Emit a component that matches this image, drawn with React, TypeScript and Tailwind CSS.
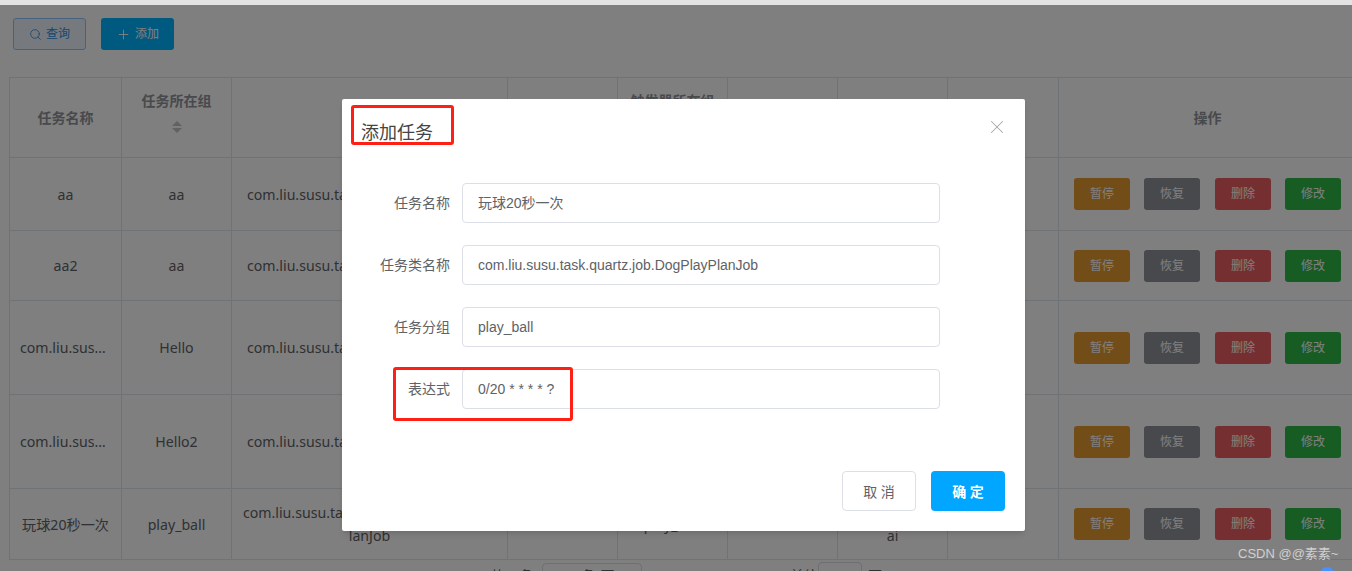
import { Plus, Search, X } from "lucide-react";

const COL_WIDTHS = [112, 110, 276, 110, 110, 110, 110, 111, 298];

const ROWS = [
  { h: "h-[73px]", name: "aa", group: "aa", cls: "com.liu.susu.task.quartz.job.HelloJob", trigger: "aa", tGroup: "aa", cron: "0/5 * * * * ?", zone: "Asia/Shanghai" },
  { h: "h-[70px]", name: "aa2", group: "aa", cls: "com.liu.susu.task.quartz.job.HelloJob", trigger: "aa2", tGroup: "aa", cron: "0/5 * * * * ?", zone: "Asia/Shanghai" },
  { h: "h-[94px]", name: "com.liu.susu.task.quartz.job.HelloJob", group: "Hello", cls: "com.liu.susu.task.quartz.job.HelloJob", trigger: "Hello", tGroup: "Hello", cron: "0/5 * * * * ?", zone: "Asia/Shanghai" },
  { h: "h-[94px]", name: "com.liu.susu.task.quartz.job.HelloJob2", group: "Hello2", cls: "com.liu.susu.task.quartz.job.HelloJob", trigger: "Hello2", tGroup: "Hello2", cron: "0/5 * * * * ?", zone: "Asia/Shanghai" },
  { h: "h-[71px]", name: "玩球20秒一次", group: "play_ball", cls: "com.liu.susu.task.quartz.job.DogPlayPlanJob", trigger: "ball", tGroup: "play_ball", cron: "0/20 * * * * ?", zone: "Asia/Shanghai" },
];

function SortArrows() {
  return (
    <svg width="10" height="12" viewBox="0 0 10 12" className="mx-auto mt-[9px] mb-[14px]">
      <path d="M5 0 L10 5 L0 5 Z" fill="#c0c4cc" />
      <path d="M5 12 L10 7 L0 7 Z" fill="#c0c4cc" />
    </svg>
  );
}

function Th({ label, sort }: { label: string; sort?: boolean }) {
  return (
    <th className="border border-[#dfe6ec] font-bold text-[14px] leading-[23px] text-[#909399] align-middle px-2">
      <div>{label}</div>
      {sort && <SortArrows />}
    </th>
  );
}

function Td({ children }: { children: React.ReactNode }) {
  return <td className="border border-[#dfe6ec] text-center align-middle px-[10px] break-all">{children}</td>;
}

function OpButton({ label, color }: { label: string; color: string }) {
  return (
    <button className={`w-14 h-8 rounded-[3px] text-xs text-white ${color}`}>{label}</button>
  );
}

function FormRow({ label, value }: { label: string; value: string }) {
  return (
    <div className="flex items-center h-10">
      <label className="w-[108px] -mt-px text-right text-[14px] text-[#606266]">{label}</label>
      <div className="ml-3 w-[478px] h-10 flex items-center px-[15px] border border-[#dcdfe6] rounded text-[14px] text-[#606266] font-['Liberation_Sans','Noto_Sans_CJK_SC',sans-serif]">
        {value}
      </div>
    </div>
  );
}

export default function App() {
  return (
    <div className="relative w-[1352px] h-[571px] overflow-hidden bg-white font-['Noto_Sans','Noto_Sans_CJK_SC',sans-serif]">
      <div className="h-[5px] bg-[#e3e3e3]" />
      <div className="flex gap-[15px] pl-[13px] pt-[13px]">
        <button className="w-[73px] h-8 flex items-center justify-center gap-1 rounded-[3px] border border-[#8cc5ff] bg-[#ecf5ff] text-xs text-[#2a8fe0]">
          <Search size={13} strokeWidth={1.5} />
          查询
        </button>
        <button className="w-[73px] h-8 flex items-center justify-center gap-1 rounded-[3px] bg-[#00b4ff] text-xs text-white">
          <Plus size={15} strokeWidth={1.5} />
          添加
        </button>
      </div>

      <table className="table-fixed border-collapse mt-[27px] ml-[9px] w-[1347px] text-[14.15px] leading-[23px] text-[#606266]">
        <colgroup>
          {COL_WIDTHS.map((w, i) => (
            <col key={i} style={{ width: w }} />
          ))}
        </colgroup>
        <thead>
          <tr className="h-[80px]">
            <Th label="任务名称" />
            <Th label="任务所在组" sort />
            <Th label="类名称" />
            <Th label="触发器名称" />
            <Th label="触发器所在组" sort />
            <Th label="表达式" />
            <Th label="时区" />
            <Th label="状态" />
            <Th label="操作" />
          </tr>
        </thead>
        <tbody>
          {ROWS.map((row, i) => (
            <tr key={i} className={row.h}>
              <Td>
                <div className="truncate">{row.name}</div>
              </Td>
              <Td>{row.group}</Td>
              <Td>{row.cls}</Td>
              <Td>{row.trigger}</Td>
              <Td>{row.tGroup}</Td>
              <Td>{row.cron}</Td>
              <Td>{row.zone}</Td>
              <Td>{""}</Td>
              <td className="border border-[#dfe6ec] pl-[15px]">
                <div className="flex gap-[14px]">
                  <OpButton label="暂停" color="bg-[#e69a30]" />
                  <OpButton label="恢复" color="bg-[#90929a]" />
                  <div className="flex gap-[14px] ml-px">
                    <OpButton label="删除" color="bg-[#ec5f63]" />
                    <OpButton label="修改" color="bg-[#2eb846]" />
                  </div>
                </div>
              </td>
            </tr>
          ))}
        </tbody>
      </table>

      <div className="flex items-start mt-[3px] ml-[490px] text-[14px] leading-none text-[#606266]">
        <span className="mt-[6px] w-[52px]">共 5 条</span>
        <div className="w-[100px] h-8 border border-[#dcdfe6] rounded text-center pt-[5px]">5 条/页</div>
        <span className="mt-[6px] w-[148px] pl-[30px]">1 2</span>
        <span className="mt-[6px] w-[28px]">前往</span>
        <div className="w-[44px] h-8 border border-[#dcdfe6] rounded -mt-px" />
        <span className="mt-[6px] ml-[6px]">页</span>
      </div>

      {/* dim layer over the page, below the browser strip */}
      <div className="absolute left-0 right-0 top-[5px] bottom-0 bg-black/50" />

      <div className="absolute left-[1320px] top-[567px] w-[14px] h-[14px] rounded-full bg-[#4a90ff]" />
      <div className="absolute left-[1238px] top-[544px] text-[13px] text-[#d0d0d0] font-['Liberation_Sans','Noto_Sans_CJK_SC',sans-serif]">
        CSDN @@素素~
      </div>

      <div className="absolute left-[342px] top-[99px] w-[683px] h-[432px] bg-white rounded-[2px] shadow-md flex flex-col">
        <div className="h-[66px] flex items-center justify-between pl-[19px] pr-[17px]">
          <span className="text-[18px] text-[#444]">添加任务</span>
          <X size={22} strokeWidth={1.1} className="text-[#a5a8ad] -mt-[10px]" />
        </div>
        <div className="mt-[18px] flex flex-col gap-[22px]">
          <FormRow label="任务名称" value="玩球20秒一次" />
          <FormRow label="任务类名称" value="com.liu.susu.task.quartz.job.DogPlayPlanJob" />
          <FormRow label="任务分组" value="play_ball" />
          <FormRow label="表达式" value="0/20 * * * * ?" />
        </div>
        <div className="mt-auto flex justify-end gap-[15px] pr-5 pb-5">
          <button className="w-[74px] h-10 border border-[#dcdfe6] rounded text-[14px] text-[#606266]">取 消</button>
          <button className="w-[74px] h-10 rounded bg-[#00a6ff] text-[14px] font-bold text-white">确 定</button>
        </div>
      </div>

      {/* hand-drawn red annotations on top of the screenshot */}
      <div className="absolute left-[351px] top-[105px] w-[103px] h-[40px] border-[3px] border-[#ff2015] rounded-[3px]" />
      <div className="absolute left-[393px] top-[367px] w-[180px] h-[54px] border-[3px] border-[#ff2015] rounded-[3px]" />
    </div>
  );
}
